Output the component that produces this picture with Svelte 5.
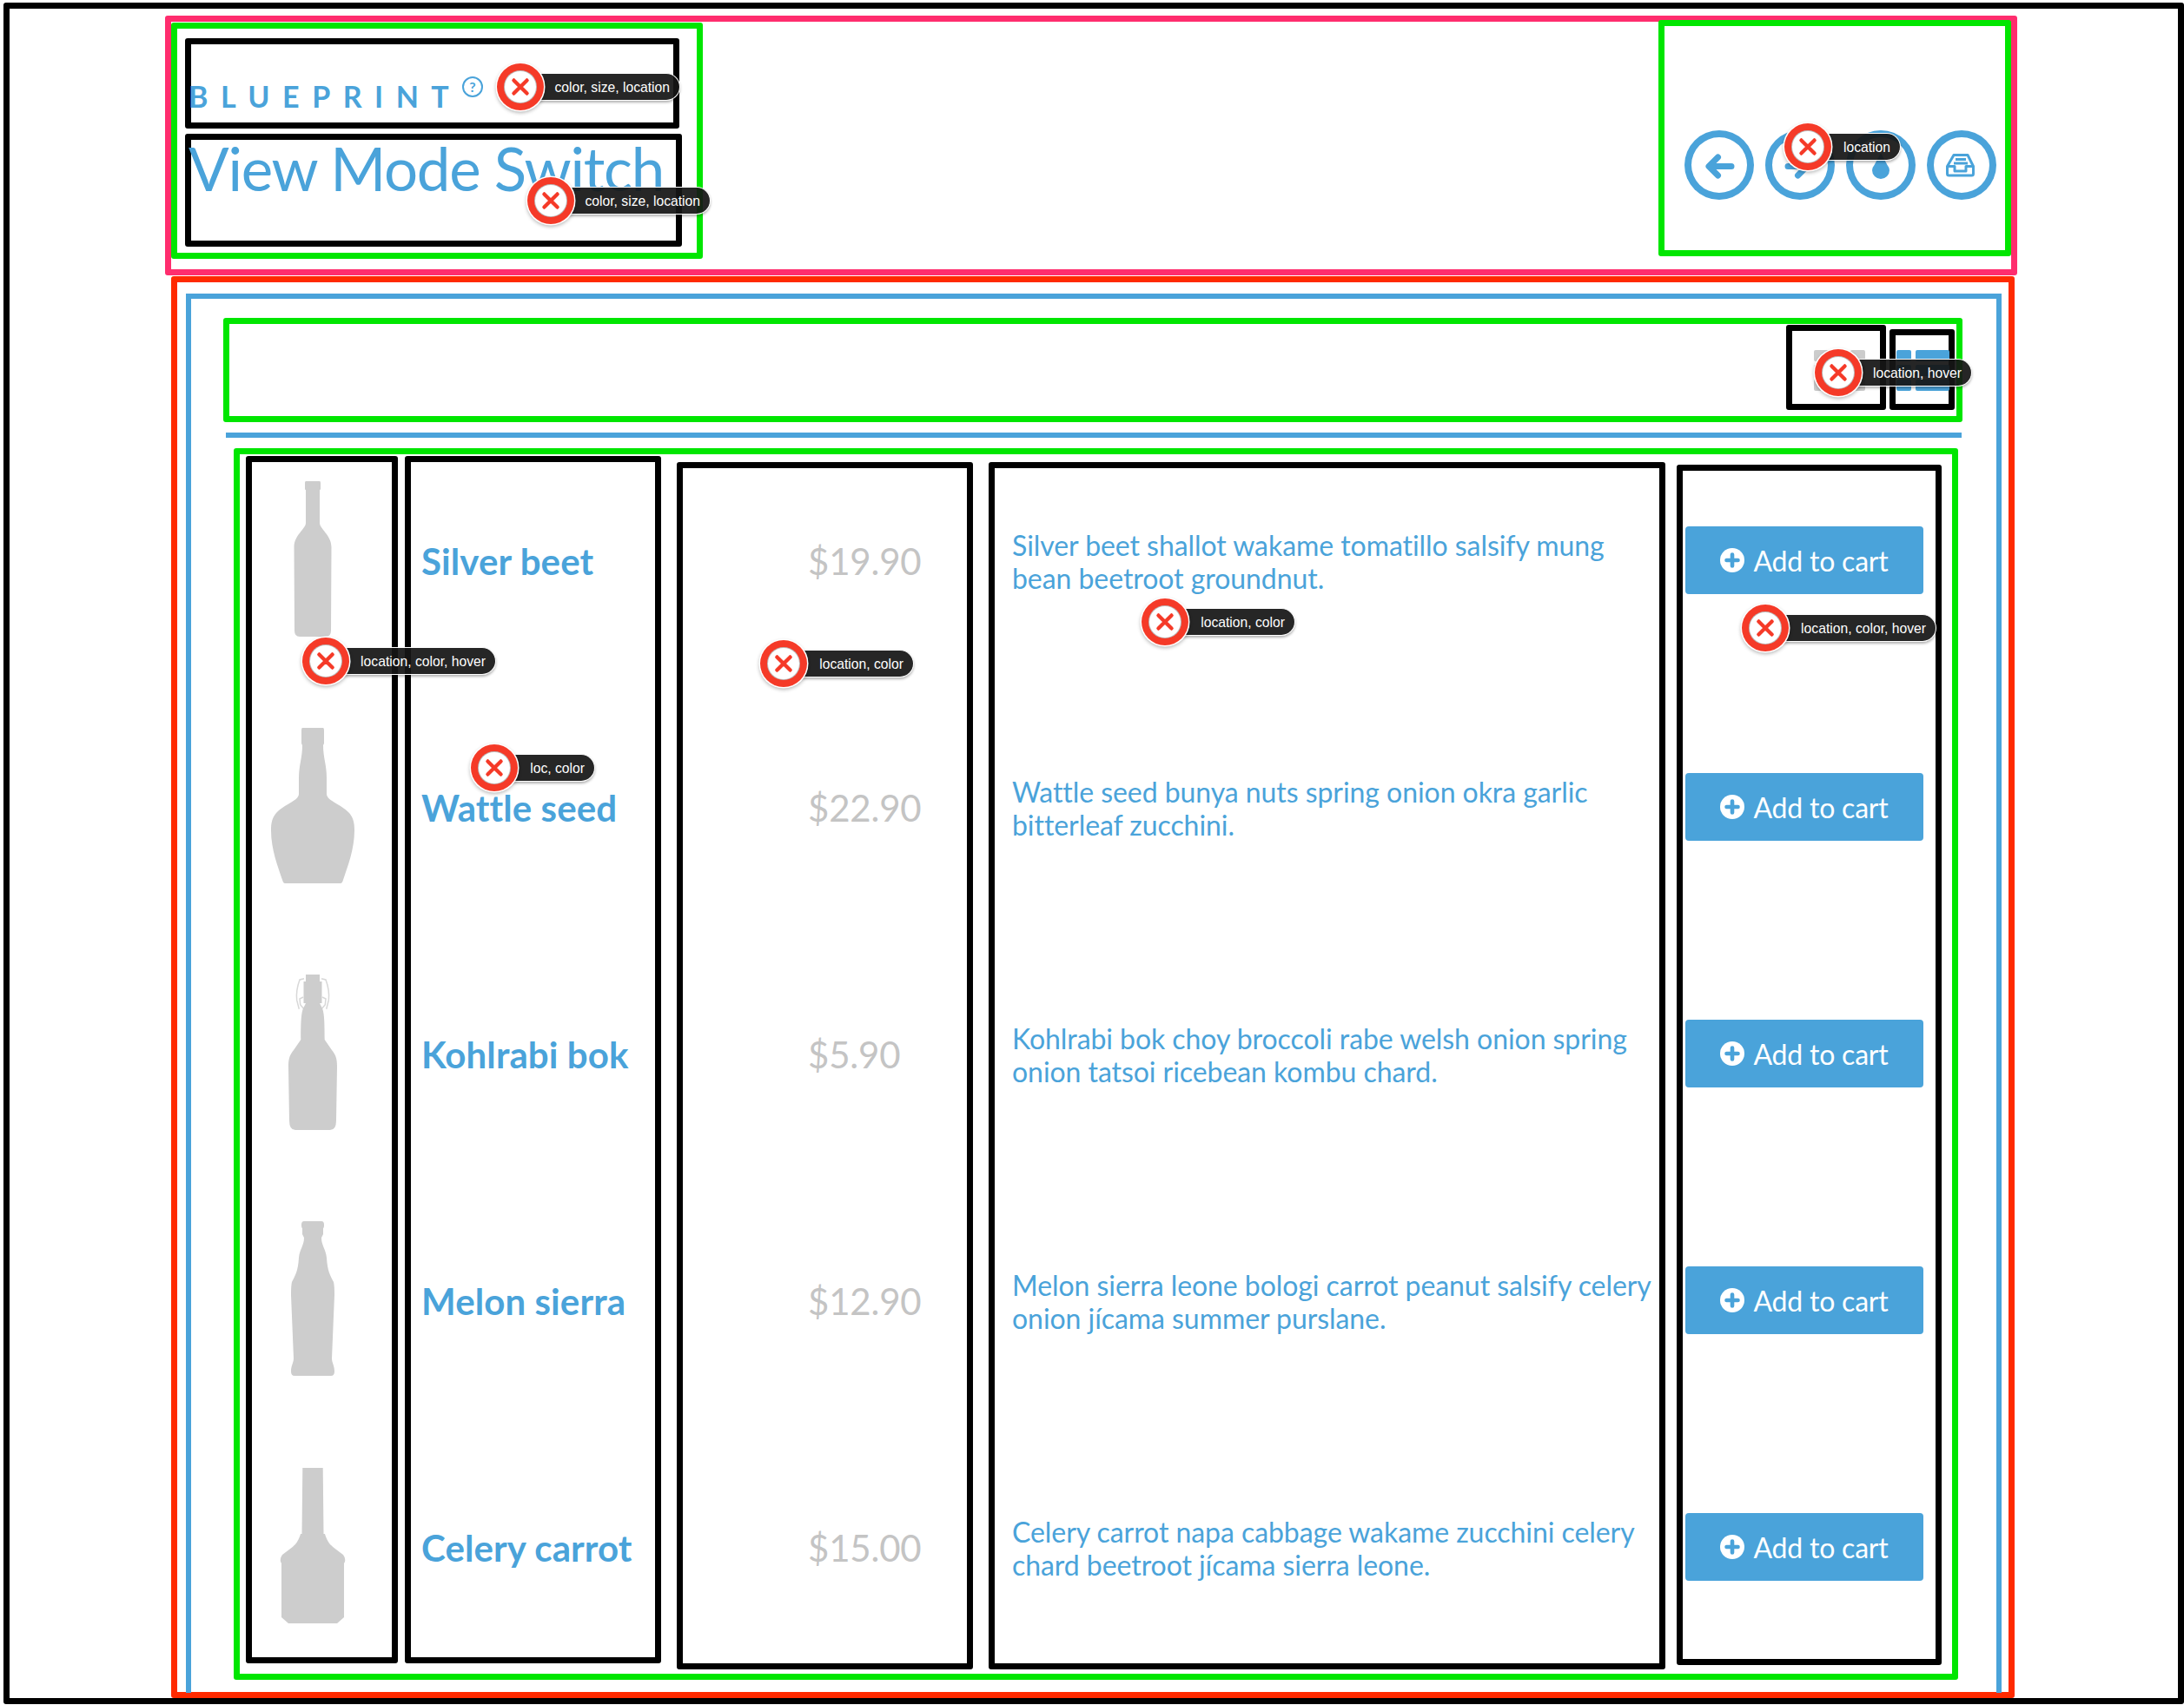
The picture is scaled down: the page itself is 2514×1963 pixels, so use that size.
<script>
  const products = [
    { name: 'Silver beet', price: '$19.90', desc: 'Silver beet shallot wakame tomatillo salsify mung bean beetroot groundnut.' },
    { name: 'Wattle seed', price: '$22.90', desc: 'Wattle seed bunya nuts spring onion okra garlic bitterleaf zucchini.' },
    { name: 'Kohlrabi bok', price: '$5.90', desc: 'Kohlrabi bok choy broccoli rabe welsh onion spring onion tatsoi ricebean kombu chard.' },
    { name: 'Melon sierra', price: '$12.90', desc: 'Melon sierra leone bologi carrot peanut salsify celery onion jícama summer purslane.' },
    { name: 'Celery carrot', price: '$15.00', desc: 'Celery carrot napa cabbage wakame zucchini celery chard beetroot jícama sierra leone.' }
  ];

  const bottles = [
    'M42 0H58Q59 0 59 2V9Q59 10 58 10V48C58 55 71.5 62 71.5 76L71 172Q71 179 65 179H35Q29 179 29 172L28.5 76C28.5 62 42 55 42 48V10Q41 10 41 9V2Q41 0 42 0Z',
    'M38 0H62Q63 0 63 3V18L62 20C62 35 66 42 66 58V76C66 84 83 88 92 98C97 104 98 110 98 118C98 140 90 160 85 175Q84 179 82 179H18Q16 179 15 175C10 160 2 140 2 118C2 110 3 104 8 98C17 88 34 84 34 76V58C34 42 38 35 38 20L37 18V3Q37 0 38 0Z',
    'M42 0H58V8H60.5V33H58L60 37C63 42 63.7 50 63.7 75L72 87C77 93 78 98 78 106L77 168Q77 179 70 179H30Q23 179 23 168L22 106C22 98 23 93 28 87L36.3 75C36.3 50 37 42 40 37L42 33H39.5V8H42Z',
    'M40 0H60Q63 0 63 4Q63 8 62 8V15L60 19C60 28 65 32 66 42C67 58 70 62 74 70Q75 74 75 85L72 158C72 163 75 166 75 173Q75 178 71 178H29Q25 178 25 173C25 166 28 163 28 158L25 85Q25 74 26 70C30 62 33 58 34 42C35 32 40 28 40 19L38 15V8Q37 8 37 4Q37 0 40 0Z',
    'M38.3 0H61.7L62.5 76H64C68 90 75 92 85 100Q88 104 87 108L86 110V172L78 179H22L14 172V110L13 108Q12 104 15 100C25 92 32 90 36 76H37.5Z'
  ];

  const marks = [
    { x: 599, y: 100, right: 783, label: 'color, size, location' },
    { x: 634, y: 231, right: 818, label: 'color, size, location' },
    { x: 2081, y: 169, right: 2188, label: 'location' },
    { x: 2116, y: 429, right: 2270, label: 'location, hover' },
    { x: 2032, y: 723, right: 2229, label: 'location, color, hover' },
    { x: 375, y: 761, right: 571, label: 'location, color, hover' },
    { x: 569, y: 884, right: 685, label: 'loc, color' },
    { x: 902, y: 764, right: 1052, label: 'location, color' },
    { x: 1341, y: 716, right: 1491, label: 'location, color' }
  ];
</script>

<div class="page">
  <header class="header">
    <div class="brand">
      <div class="logo">
        <span class="wordmark">BLUEPRINT</span>
        <span class="help">?</span>
      </div>
      <div class="title-box">
        <h1>View Mode Switch</h1>
      </div>
    </div>
    <nav class="actions">
      <span class="round">
        <svg viewBox="0 0 80 80"><path class="stroke" d="M54 41.5H29M38.5 31 28 41.5 38.5 52" /></svg>
      </span>
      <span class="round">
        <svg viewBox="0 0 80 80"><path class="stroke" d="M26 41.5H48M37.5 31 48 41.5 37.5 52" /></svg>
      </span>
      <span class="round">
        <svg viewBox="0 0 80 80"><path class="fill" d="M40 26 47.5 40Q50 43 50 46A10 10 0 0 1 30 46Q30 43 32.5 40Z" /></svg>
      </span>
      <span class="round">
        <svg viewBox="0 0 80 80">
          <path class="thin" d="M31 28.5H47L53.5 41.5V50Q53.5 52 51.5 52H25.5Q23.5 52 23.5 50V41.5ZM23.5 41.5H32V47H45V41.5H53.5M33 33.5H45M31 38H47" />
        </svg>
      </span>
    </nav>
  </header>

  <main class="main">
    <section class="panel">
      <div class="toolbar">
        <div class="view-box grid-box">
          <div class="grid-view">
            {#each Array(9) as _}<i></i>{/each}
          </div>
        </div>
        <div class="view-box list-box">
          <div class="list-view">
            {#each Array(3) as _}<i></i><b></b>{/each}
          </div>
        </div>
      </div>
      <hr />
      <div class="list">
        <div class="col col-img">
          {#each bottles as d, i}
            <svg class="bottle" viewBox="0 0 100 180">
              {#if i === 2}
                <path class="wire" d="M40 4.7 35 6C32 14 31 24 31.7 29.7L34.3 39.7M39 26 35 28 35.7 34.7 40 39.7M60 4.7 65 6C68 14 69 24 68.3 29.7L65.7 39.7M61 26 65 28 64.3 34.7 60 39.7" />
              {/if}
              <path {d} />
            </svg>
          {/each}
        </div>
        <div class="col col-name">
          {#each products as p}<div class="cell name">{p.name}</div>{/each}
        </div>
        <div class="col col-price">
          {#each products as p}<div class="cell price">{p.price}</div>{/each}
        </div>
        <div class="col col-desc">
          {#each products as p}<div class="cell desc"><p>{p.desc}</p></div>{/each}
        </div>
        <div class="col col-btn">
          {#each products as p}
            <button class="cell cart" type="button">
              <svg viewBox="0 0 28 28"><circle cx="14" cy="14" r="14" fill="#fff" /><path d="M14 7.5V20.5M7.5 14H20.5" stroke="#4aa3da" stroke-width="4.6" stroke-linecap="round" /></svg>
              Add to cart
            </button>
          {/each}
        </div>
      </div>
    </section>
  </main>
</div>

{#each marks as m}
  <div class="mark" style="left:{m.x}px;top:{m.y}px;width:{m.right - m.x}px">
    <span class="pill">{m.label}</span>
    <span class="dot">
      <svg viewBox="0 0 24 24"><path d="M5 5 19 19M19 5 5 19" /></svg>
    </span>
  </div>
{/each}

<style>
  :global(body) {
    margin: 0;
    background: #fff;
    overflow: hidden;
    font-family: Lato, "Liberation Sans", sans-serif;
  }
  * { box-sizing: border-box; }

  .page {
    margin: 3px 0 0 4px;
    width: 2510px;
    height: 1959px;
    border: 7px solid #000;
    border-radius: 3px;
    overflow: visible;
  }

  .header {
    display: flex;
    justify-content: space-between;
    align-items: flex-start;
    width: 2132px;
    height: 299px;
    margin: 8px 0 0 179px;
    border: 7px solid #ff2d6e;
    border-radius: 3px;
  }
  .brand {
    width: 612px;
    height: 272px;
    margin-top: 1px;
    padding: 11px 0 0 9px;
    border: 7px solid #00e600;
    border-radius: 3px;
    display: flex;
    flex-direction: column;
    gap: 6px;
  }
  .logo {
    position: relative;
    width: 569px;
    height: 104px;
    border: 7px solid #000;
    border-radius: 3px;
    color: #4aa3da;
    padding-top: 40px;
    line-height: 40px;
  }
  .wordmark {
    display: inline-block;
    margin-left: -3px;
    font-size: 34px;
    font-weight: 700;
    letter-spacing: 14.5px;
  }
  .help {
    position: absolute;
    left: 312px;
    top: 37px;
    width: 24px;
    height: 24px;
    border: 2px solid #4aa3da;
    border-radius: 50%;
    font-size: 16px;
    font-weight: 700;
    line-height: 20px;
    text-align: center;
  }
  .title-box {
    width: 572px;
    height: 130px;
    border: 7px solid #000;
    border-radius: 3px;
  }
  h1 {
    margin: -2px 0 0 -3px;
    font-size: 69px;
    font-weight: 400;
    letter-spacing: -1.3px;
    line-height: 70px;
    color: #4aa3da;
    white-space: nowrap;
  }

  .actions {
    width: 406px;
    height: 272px;
    margin-top: -2px;
    border: 7px solid #00e600;
    border-radius: 3px;
    display: flex;
    gap: 13px;
    padding: 120px 0 0 23px;
  }
  .round {
    flex: none;
    width: 80px;
    height: 80px;
    border-radius: 50%;
    box-shadow: inset 0 0 0 8px #4aa3da;
  }
  .round svg { display: block; width: 80px; height: 80px; }
  .stroke { fill: none; stroke: #4aa3da; stroke-width: 7; stroke-linecap: round; stroke-linejoin: round; }
  .fill { fill: #4aa3da; }
  .thin { fill: none; stroke: #4aa3da; stroke-width: 3; stroke-linejoin: round; }

  .main {
    width: 2122px;
    height: 1637px;
    margin: 1px 0 0 186px;
    border: 7px solid #ff2a00;
    border-radius: 3px;
    padding: 13px 0 0 10px;
  }
  .panel {
    width: 2090px;
    height: 1611px;
    border: 6px solid #4aa3da;
    border-bottom: 0;
    padding: 22px 0 0 37px;
  }
  .toolbar {
    display: flex;
    justify-content: flex-end;
    align-items: flex-end;
    gap: 4px;
    width: 2002px;
    height: 120px;
    border: 7px solid #00e600;
    border-radius: 3px;
    padding: 0 2px 7px 0;
  }
  .view-box {
    border: 7px solid #000;
    border-radius: 3px;
  }
  .grid-box { width: 115px; height: 98px; padding: 22px 0 0 25px; }
  .list-box { width: 75px; height: 93px; padding: 17px 0 0 1px; }
  .grid-view {
    display: grid;
    grid-template-columns: repeat(3, 17px);
    grid-auto-rows: 13px;
    gap: 4px;
  }
  .grid-view i { background: #ccc; border-radius: 2px; }
  .list-view {
    display: grid;
    grid-template-columns: 17px 39px;
    grid-auto-rows: 13px;
    gap: 4px 5px;
  }
  .list-view i, .list-view b { background: #4aa3da; border-radius: 2px; }

  hr {
    width: 1998px;
    height: 6px;
    margin: 12px 0 12px 3px;
    border: 0;
    background: #4aa3da;
  }

  .list {
    display: flex;
    align-items: flex-start;
    width: 1985px;
    height: 1418px;
    margin-left: 12px;
    border: 7px solid #00e600;
    border-radius: 3px;
  }
  .col {
    flex: none;
    display: flex;
    flex-direction: column;
    gap: 206px;
    border: 7px solid #000;
    border-radius: 3px;
  }
  .col-img { width: 175px; height: 1390px; margin: 2px 0 0 7px; padding: 22px 0 0 20px; gap: 104px; }
  .col-name { width: 295px; height: 1390px; margin: 2px 0 0 8px; padding: 75px 0 0 12px; }
  .col-price { width: 341px; height: 1390px; margin: 9px 0 0 18px; padding: 68px 0 0 144px; }
  .col-desc { width: 779px; height: 1390px; margin: 9px 0 0 18px; padding: 67px 0 0 20px; }
  .col-btn { width: 305px; height: 1382px; margin: 12px 0 0 13px; padding: 64px 0 0 3px; }

  .bottle { display: block; width: 100px; height: 180px; flex: none; }
  .bottle path { fill: #cdcdcd; }
  .bottle .wire { fill: none; stroke: #d8d8d8; stroke-width: 1.5; }

  .cell {
    flex: none;
    height: 78px;
    display: flex;
    align-items: center;
  }
  .name { font-size: 42px; font-weight: 700; letter-spacing: 0.1px; color: #4aa3da; white-space: nowrap; }
  .price { font-size: 42px; letter-spacing: -0.2px; color: #c4c4c4; }
  .desc { font-size: 32px; letter-spacing: -0.06px; color: #4aa3da; }
  .desc p { margin: 4px 0 0; width: 745px; line-height: 38.4px; }
  .cart {
    width: 274px;
    justify-content: center;
    gap: 10px;
    border: 0;
    border-radius: 4px;
    background: #4aa3da;
    color: #fff;
    font-family: inherit;
    font-size: 32px;
    letter-spacing: -0.2px;
    padding: 0;
  }
  .cart svg { width: 28px; height: 28px; flex: none; }

  .mark {
    position: absolute;
    height: 0;
  }
  .pill {
    position: absolute;
    left: 0;
    right: 0;
    top: -16px;
    height: 32px;
    padding: 2px 11px 0 0;
    display: flex;
    align-items: center;
    justify-content: flex-end;
    border: 1.5px solid #fff;
    border-left: 0;
    border-radius: 0 16px 16px 0;
    background: rgba(22, 22, 22, 0.93);
    color: #fff;
    font: 15.7px "Liberation Sans", sans-serif;
    white-space: nowrap;
    box-shadow: 0 2px 3px rgba(0, 0, 0, 0.3);
  }
  .dot {
    position: absolute;
    left: -27px;
    top: -27px;
    width: 54px;
    height: 54px;
    padding: 9px;
    border-radius: 50%;
    background: #f53a28;
    box-shadow: 0 0 0 1.5px #fff, 0 2px 4px 1px rgba(0, 0, 0, 0.3);
  }
  .dot svg {
    display: block;
    width: 36px;
    height: 36px;
    padding: 5px;
    border-radius: 50%;
    background: #fff;
    box-shadow: 0 0 0 1px #bbb;
  }
  .dot path { fill: none; stroke: #f53a28; stroke-width: 4; stroke-linecap: round; }
</style>
